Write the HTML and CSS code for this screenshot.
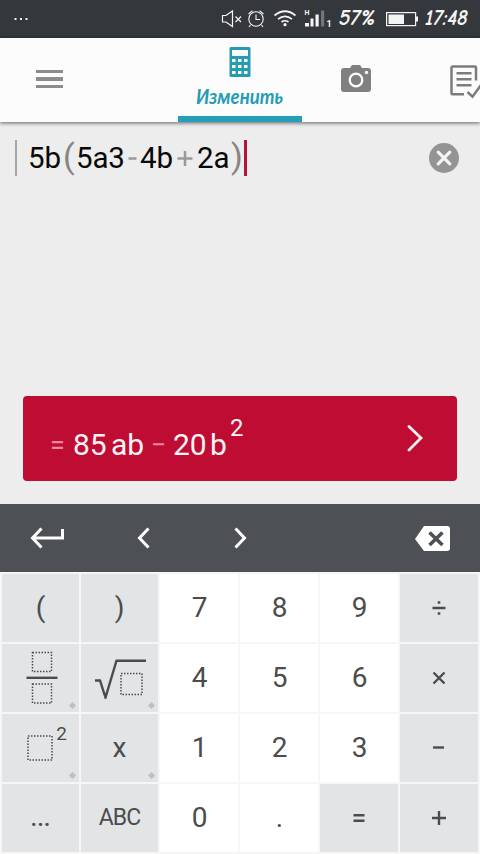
FILE: index.html
```html
<!DOCTYPE html>
<html lang="ru">
<head>
<meta charset="utf-8">
<meta name="viewport" content="width=device-width, initial-scale=1">
<title>Калькулятор</title>
<link rel="stylesheet" href="styles.css">
</head>
<body>
<div class="app">
  <div class="status">
    <svg class="more" width="14" height="4" viewBox="0 0 14 4" fill="#f2f2f2"><rect x="0.5" y="1" width="2" height="2"/><rect x="6" y="1" width="2" height="2"/><rect x="11.500" y="1" width="2" height="2"/></svg>
    <svg class="indicators" width="260" height="38" viewBox="220 0 260 38" fill="none" stroke="#f4f4f4">
      <path d="M222.500 15.500h3.500l6.500-4.500v15.500l-6.500-4.500h-3.500z" stroke-width="1.200"/>
      <path d="M235.500 16.500l5.500 5.500m0-5.500l-5.500 5.500" stroke-width="1.200"/>
      <circle cx="256" cy="19" r="7.200" stroke-width="1.100"/>
      <path d="M256 14.500v5h4M248.500 14l4-3.300M263.500 14l-4-3.300M250.500 25l-1.500 2M261.500 25l1.500 2" stroke-width="1.100"/>
      <path d="M274.500 15.500q10.500-8.500 21 0M278 19.200q7-5.500 14 0M281.500 22q3.500-2.500 7 0" stroke-width="1.700"/>
      <circle cx="285" cy="24.700" r="1.600" fill="#f4f4f4" stroke="none"/>
      <g stroke="none" fill="#f4f4f4">
        <rect x="305" y="23" width="4" height="3.500"/><rect x="310.500" y="18.500" width="3" height="8"/><rect x="315.500" y="14.500" width="3.200" height="12"/><rect x="321" y="10.500" width="3.200" height="16" fill="#72757a"/>
        <text x="304.500" y="14.800" class="net">H</text>
        <text x="326.500" y="27" class="sim">1</text>
        <text x="338.500" y="25" class="hand hand-status" textLength="37" lengthAdjust="spacingAndGlyphs">57%</text>
        <text x="425" y="25" class="hand hand-status" textLength="43" lengthAdjust="spacingAndGlyphs">17:48</text>
        <rect x="388.500" y="14.500" width="15.500" height="9.500"/><rect x="416" y="16.500" width="2" height="5"/>
      </g>
      <rect x="386.600" y="12.600" width="29" height="13" stroke-width="1.200"/>
    </svg>
  </div>

  <header class="tabs">
    <div class="menu"><i></i><i></i><i></i></div>
    <div class="tab-active">
      <svg class="calc" width="22" height="30" viewBox="0 0 22 30"><rect x="0.500" width="21" height="30" rx="1.500" fill="#259cb4"/><path fill="#fcfcfc" d="M3 3h16v6H3zM3 12h3.500v3H3zM9 12h3.500v3H9zM15 12h3.500v3H15zM3 18h3.500v3H3zM9 18h3.500v3H9zM15 18h3.500v3H15zM3 24h3.500v3H3zM9 24h3.500v3H9zM15 24h3.500v3H15z"/></svg>
      <svg class="tab-label" width="100" height="30" viewBox="0 0 100 30"><text x="6" y="21" class="hand hand-tab" textLength="87" lengthAdjust="spacingAndGlyphs">Изменить</text></svg>
    </div>
    <svg class="camera" width="30" height="28" viewBox="0 0 30 28"><path fill="#808080" d="M3 3h6l2-3h8l2 3h6a3 3 0 0 1 3 3v18a3 3 0 0 1-3 3H3a3 3 0 0 1-3-3V6a3 3 0 0 1 3-3z"/><circle cx="15" cy="15" r="6.200" fill="none" stroke="#fcfcfc" stroke-width="2.500"/><circle cx="15" cy="15" r="5" fill="#808080"/><circle cx="25.500" cy="7.500" r="1.700" fill="#fcfcfc"/></svg>
    <svg class="tasks" width="30" height="34" viewBox="0 0 30 34" fill="none" stroke="#7c7c7c" stroke-width="2.500"><path d="M14 29.200H2.500a1 1 0 0 1-1-1V2.500a1 1 0 0 1 1-1H25a1 1 0 0 1 1 1V15.500M6.500 8.300h15M6.500 14.300h15M6.500 20.300h15M17.500 27l5 4.700L32 18.500"/></svg>
  </header>

  <main class="work">
    <div class="entry">
      <i class="bar"></i>
      <div class="formula"><span>5b</span><span class="paren">(</span><span>5a3</span><svg width="16" height="34"><path class="op" d="M4.500 17.500h8"/></svg><span>4b</span><svg width="19" height="34"><path class="op" d="M.5 17.500h15M8 10v15"/></svg><span>2a</span><span class="paren">)</span></div>
      <i class="caret"></i>
      <svg class="clear" width="30" height="30" viewBox="0 0 30 30"><circle cx="15" cy="15" r="15" fill="#949494"/><path d="M9.200 9.200l11.600 11.600m0-11.600L9.200 20.800" stroke="#f4f4f4" stroke-width="3.200" stroke-linecap="round"/></svg>
    </div>
    <div class="result">
      <div class="answer"><span class="soft">=</span><span>85</span><span>ab</span><span class="soft">−</span><span>20</span><span>b</span><sup>2</sup></div>
      <svg width="18" height="28" viewBox="0 0 18 28"><path d="M2 1.500l12 11.500L2 25" fill="none" stroke="#fff0f3" stroke-width="2.800" stroke-linecap="round"/></svg>
    </div>
  </main>

  <nav class="toolbar">
    <svg width="34" height="22" viewBox="0 0 34 22"><path d="M11.500 1.500L2.500 11l9 9.500M3 11h29.500V2" /></svg>
    <svg width="14" height="22" viewBox="0 0 14 22"><path d="M12.500 1.500L3.500 11l9 9.500"/></svg>
    <svg width="14" height="22" viewBox="0 0 14 22"><path d="M2.500 1.500l9 9.500-9 9.500"/></svg>
    <svg class="erase" width="35" height="25" viewBox="0 0 35 25"><path class="solid" d="M9 0h23a3 3 0 0 1 3 3v19a3 3 0 0 1-3 3H9L0 13z"/><path class="cross" d="M14.500 6.500l13 12.500m0-12.500L14.500 19"/></svg>
  </nav>

  <div class="keys">
    <div class="key fn">(</div><div class="key fn">)</div><div class="key">7</div><div class="key">8</div><div class="key">9</div><div class="key fn"><svg width="16" height="16" viewBox="0 0 16 16"><path d="M1.500 8h13M6.700 2.500h2.600M6.700 13.500h2.600"/></svg></div>

    <div class="key fn more-key frac"><svg width="32" height="54" viewBox="0 0 32 54"><path class="dots" d="M6.500 1.500h19v19h-19zM6.500 33h19v19h-19z"/><path d="M.5 26.800h31"/></svg></div>
    <div class="key fn more-key"><svg width="52" height="42" viewBox="0 0 52 42"><path d="M1 22.500h5l5.500 17L22.500 2.700H52" transform="translate(0 1)"/><path class="dots" d="M27 16.500h21v21H27z"/></svg></div>
    <div class="key">4</div><div class="key">5</div><div class="key">6</div><div class="key fn"><svg width="16" height="16" viewBox="0 0 16 16"><path d="M2.500 2.500l11 11m0-11l-11 11"/></svg></div>

    <div class="key fn more-key power"><svg width="27" height="27" viewBox="0 0 27 27"><path class="dots" d="M1 1h24v24H1z"/></svg><sup>2</sup></div>
    <div class="key fn more-key">x</div><div class="key">1</div><div class="key">2</div><div class="key">3</div><div class="key fn"><svg width="16" height="16" viewBox="0 0 16 16"><path d="M2 7.500h11"/></svg></div>

    <div class="key fn dotted">...</div><div class="key fn abc">ABC</div><div class="key">0</div><div class="key">.</div><div class="key fn"><svg width="16" height="16" viewBox="0 0 16 16"><path d="M2.500 5.200h11M2.500 10.800h11"/></svg></div><div class="key fn"><svg width="16" height="16" viewBox="0 0 16 16"><path d="M1 8h14M8 1v14"/></svg></div>
  </div>
</div>
</body>
</html>
```

FILE: styles.css
```css
* { box-sizing: border-box; }
body { margin: 0; font-family: Roboto, "Liberation Sans", sans-serif; }
svg { display: block; flex: none; }
.app { width: 480px; height: 854px; overflow: hidden; display: flex; flex-direction: column; background: #ededed; }

.status { height: 38px; flex: none; display: flex; align-items: center; justify-content: space-between; padding-left: 14px; background: #34373b; }
.net { font: bold 7px Roboto, sans-serif; }
.sim { font: bold 9px Roboto, sans-serif; }
.hand { font-family: "Comic Neue", "Segoe Print", Lato, sans-serif; font-style: italic; }
.hand-status { font-size: 21px; font-weight: 700; }
.hand-tab { font-size: 21px; font-weight: 700; fill: #259cb4; }

.tabs { height: 84px; flex: none; display: flex; align-items: flex-start; background: #fcfcfc; box-shadow: 0 1px 4px rgba(0,0,0,.6); z-index: 1; overflow-x: clip; }
.menu { width: 27px; margin: 32px 115px 0 36px; display: flex; flex-direction: column; gap: 4px; }
.menu i { height: 3.3px; background: #8c8c8c; }
.tab-active { width: 124px; height: 84px; display: flex; flex-direction: column; align-items: center; border-bottom: 6px solid #259fb8; }
.calc { margin-top: 9px; }
.tab-label { margin-top: 6px; }
.camera { margin: 27px 0 0 39px; }
.tasks { margin: 27px 0 0 79px; }

.work { height: 382px; flex: none; padding: 17px 23px 23px; display: flex; flex-direction: column; justify-content: space-between; }
.entry { height: 38px; display: flex; align-items: center; margin: 0 -2px 0 -8px; }
.bar { width: 2px; height: 36px; background: #a5a5a5; margin-right: 11px; }
.formula { height: 38px; display: grid; grid-template-columns: 35px 13px 48px 16px 37px 20px 34px 13px; align-items: center; font-size: 29.500px; line-height: 38px; color: #080808; }
.formula span { letter-spacing: -.2px; }
.formula .paren { color: #858585; font-size: 34px; line-height: 34px; transform: translateY(-2px); }
.op { stroke: #999; stroke-width: 2.500; fill: none; }
.caret { width: 3px; height: 36px; background: #b3143c; }
.clear { margin-left: auto; }
.result { height: 85px; border-radius: 4px; background: #be0c33; padding: 0 32px 0 27px; display: flex; align-items: center; justify-content: space-between; }
.answer { display: grid; grid-template-columns: 23px 38px 40px 22px 37px 20px 20px; align-items: center; color: #fff3f5; font-size: 30px; line-height: 36px; padding-top: 12px; }
.answer .soft { color: #f0899e; font-size: 27px; }
.answer sup { font-size: 24px; line-height: 30px; transform: translateY(-17px); }

.toolbar { height: 68px; flex: none; display: flex; align-items: center; padding: 0 30px; background: #4d5054; }
.toolbar svg { fill: none; stroke: #fff; stroke-width: 3; }
.toolbar svg:nth-child(2) { margin-left: 72px; }
.toolbar svg:nth-child(3) { margin-left: 83px; }
.toolbar .erase { margin-left: auto; }
.toolbar .solid { fill: #fff; stroke: none; }
.toolbar .cross { stroke: #4d5054; stroke-width: 3.600; }

.keys { height: 282px; flex: none; display: grid; grid-template-columns: 77px 77px repeat(4, 78px); grid-template-rows: repeat(4, 68px); gap: 2px; padding: 2px; background: #f6f6f7; }
.key { position: relative; display: flex; align-items: center; justify-content: center; background: #fff; color: #4b4c4e; font-size: 28px; line-height: 32px; padding-left: 1px; }
.fn { background: #e3e4e6; padding-left: 0; }
.key svg { fill: none; stroke: #4b4c4e; stroke-width: 2.400; }
.key .dots { stroke-width: 1.500; stroke-dasharray: 1.500 1.500; }
.more-key::after { content: ""; position: absolute; right: 4px; bottom: 4px; width: 5px; height: 5px; background: #bebfc1; transform: rotate(45deg); }
.frac { padding-left: 3px; }
.power { align-items: flex-start; padding-top: 21px; padding-left: 13px; }
.power sup { font-size: 19px; line-height: 20px; margin: -11px 0 0 2px; }
.abc { font-size: 23px; letter-spacing: -.9px; }
.dotted { font-size: 24px; font-weight: 500; }
```
